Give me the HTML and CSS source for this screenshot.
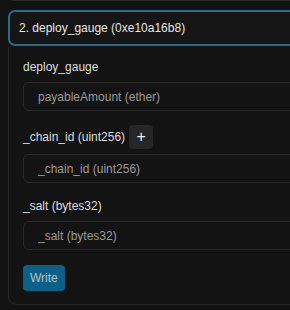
FILE: index.html
```html
<!DOCTYPE html>
<html lang="en">
<head>
    <meta charset="UTF-8">
    <meta name="viewport" content="width=device-width, initial-scale=1.0">
    <title>deploy_gauge</title>
    <link rel="stylesheet" href="styles.css">
</head>
<body>
    <div class="accordion">
        <div class="item prev"></div>
        <div class="item">
            <button class="item-head">2. deploy_gauge (0xe10a16b8)</button>
            <div class="item-body">
                <div class="field">
                    <label class="field-label">deploy_gauge</label>
                    <input class="field-input" type="text" placeholder="payableAmount (ether)">
                </div>
                <div class="field">
                    <div class="label-row">
                        <label class="field-label">_chain_id (uint256)</label>
                        <button class="add">+</button>
                    </div>
                    <input class="field-input" type="text" placeholder="_chain_id (uint256)">
                </div>
                <div class="field">
                    <label class="field-label">_salt (bytes32)</label>
                    <input class="field-input" type="text" placeholder="_salt (bytes32)">
                </div>
                <button class="write">Write</button>
            </div>
        </div>
    </div>
</body>
</html>
```

FILE: styles.css
```css
body{
    margin: 0;
    background: #121212;
    font-family: "Liberation Sans", Arial, sans-serif;
    overflow: hidden;
}
.accordion{
    width: 420px;
    margin-left: 8px;
}
.item.prev{
    height: 9px;
    margin-top: -10px;
    margin-bottom: 9px;
    border: 1px solid #2a2a2a;
    border-radius: 6px;
}
.item-head{
    display: block;
    width: 100%;
    height: 36px;
    padding: 0 9px;
    text-align: left;
    background: #151515;
    color: #e6e6e6;
    font-family: inherit;
    font-size: 12px;
    border: 2px solid #2b6a88;
    border-radius: 7px;
}
.item-body{
    border: 1px solid #262626;
    border-top: none;
    border-radius: 0 0 8px 8px;
    padding: 9px 14px 13px;
    background: #131313;
}
.field{
    margin-bottom: 11px;
}
.field-label{
    display: block;
    color: #dedede;
    font-size: 12px;
    line-height: 24px;
}
.label-row{
    display: flex;
    align-items: center;
    gap: 4px;
    height: 29px;
}
.add{
    width: 24px;
    height: 24px;
    padding: 0;
    border: none;
    border-radius: 4px;
    background: #262626;
    color: #f0f0f0;
    font-size: 16px;
    line-height: 20px;
}
.field-input{
    display: block;
    box-sizing: border-box;
    width: 100%;
    height: 29px;
    margin-top: 3px;
    padding: 0 14px;
    background: #131313;
    border: 1px solid #282828;
    border-radius: 6px;
    font-family: inherit;
    font-size: 12px;
    color: #ddd;
}
.field-input::placeholder{
    color: #9a9a9a;
}
.write{
    margin-top: 4px;
    height: 26px;
    padding: 0 7px;
    border: none;
    border-radius: 4px;
    background: #0c5f86;
    color: #b4c0c8;
    font-family: inherit;
    font-size: 12px;
}
```
